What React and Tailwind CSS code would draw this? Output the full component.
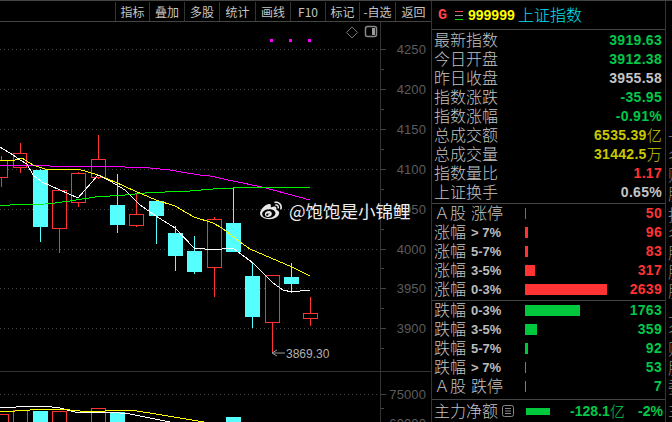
import React from "react";
import { FaWeibo } from "react-icons/fa";

const tools = [
  ["指标", "w-[34px]"],
  ["叠加", "w-[35px]"],
  ["多股", "w-[35px]"],
  ["统计", "w-[36px]"],
  ["画线", "w-[35px]"],
  ["F10", "w-[35px]"],
  ["标记", "w-[34px]"],
  ["-自选", "w-[36px]"],
  ["返回", "w-[36px]"],
];

const G = "text-[#00c848]";
const Y = "text-[#c8c800]";
const W = "text-[#c4c4c4]";
const R = "text-[#ff3333]";

const stats = [
  ["最新指数", "3919.63", G],
  ["今日开盘", "3912.38", G],
  ["昨日收盘", "3955.58", W],
  ["指数涨跌", "-35.95", G],
  ["指数涨幅", "-0.91%", G],
  ["总成交额", "6535.39", Y, "亿"],
  ["总成交量", "31442.5", Y, "万"],
  ["指数量比", "1.17", R],
  ["上证换手", "0.65%", W],
];

const ups = [
  ["Ａ股", "涨停", 1, "50", true],
  ["涨幅", "> 7%", 3, "96"],
  ["涨幅", "5-7%", 3, "83"],
  ["涨幅", "3-5%", 10, "317"],
  ["涨幅", "0-3%", 82, "2639"],
];
const downs = [
  ["跌幅", "0-3%", 55, "1763"],
  ["跌幅", "3-5%", 12, "359"],
  ["跌幅", "5-7%", 3, "92"],
  ["跌幅", "> 7%", 1, "53"],
  ["Ａ股", "跌停", 1, "7", true],
];

const edge = ["", "", "", "", "", "一", "名", "财", "股"];
const edge2 = ["指", "名", "股", "股", "股"];
const edge3 = ["上", "名", "财", "股", "委"];

const candles = [
  [-6, 8, 160, 177, 156, 187, 1, 1],
  [13, 27, 153, 167, 143, 173, 20, 1],
  [33, 48, 170, 227, 169, 242, 40, 0],
  [52, 67, 190, 228, 190, 253, 59, 1],
  [71, 86, 173, 202, 172, 207, 78, 1],
  [91, 106, 159, 177, 135, 179, 98, 1],
  [110, 125, 205, 225, 174, 233, 117, 0],
  [129, 144, 214, 225, 193, 227, 136, 1],
  [149, 164, 201, 216, 201, 244, 156, 0],
  [168, 183, 233, 256, 226, 271, 175, 0],
  [187, 202, 251, 272, 236, 274, 194, 0],
  [207, 222, 219, 267, 217, 297, 214, 1],
  [226, 241, 223, 252, 188, 252, 233, 0],
  [245, 260, 276, 317, 262, 328, 252, 0],
  [265, 280, 275, 322, 275, 353, 272, 1],
  [284, 299, 277, 284, 263, 293, 291, 0],
  [303, 318, 313, 318, 297, 326, 310, 1],
];

const white = "0,147 13,155 20,160 27,164 33,175 42,182 60,190 78,198 98,175 110,181 125,190 140,205 156,216 175,228 194,248 205,249 222,249 233,248 245,257 253,263 273,283 283,290 292,292 300,291 310,290";
const yellow = "0,160 15,160 22,158 33,165 45,169 60,170 78,169 98,175 115,182 135,191 156,200 175,206 194,217 213,223 222,228 240,242 250,249 292,267 310,276";
const magenta = "0,165 33,165 50,166 98,166 125,167 150,168 170,170 187,173 200,175 210,176 233,181 262,187 310,200";
const green = "0,205 10,205 45,204 55,203 70,201 95,197 125,195 145,193 165,192 190,191 213,189 233,188 262,187 300,187 310,188";
const volWhite = "0,408 16,407 43,406 60,408 75,412 80,413 110,412 130,414 150,418 175,423";
const volYellow = "0,412 30,410 60,409 80,411 105,411 130,410 150,413 180,418 210,423";

const grid = [49, 89, 129, 169, 209, 249, 288, 328, 394];
const labels = [
  [49, "4250"],
  [89, "4200"],
  [129, "4150"],
  [169, "4100"],
  [209, "4050"],
  [249, "4000"],
  [288, "3950"],
  [328, "3900"],
  [394, "75000"],
  [423, "60000"],
];
const minor = [69, 109, 149, 189, 229, 268, 308, 348, 408];

function Candle({ c }) {
  const [x1, x2, top, bot, hi, lo, wx, up] = c;
  const col = up ? "#ff3333" : "#55ffff";
  return (
    <g shapeRendering="crispEdges">
      <line x1={wx + 0.5} x2={wx + 0.5} y1={hi} y2={top} stroke={col} />
      <line x1={wx + 0.5} x2={wx + 0.5} y1={bot} y2={lo} stroke={col} />
      {up ? (
        <rect x={x1 + 0.5} y={top + 0.5} width={x2 - x1 - 1} height={bot - top} fill="#000" stroke={col} />
      ) : (
        <rect x={x1} y={top} width={x2 - x1} height={bot - top} fill={col} />
      )}
    </g>
  );
}

function Chart() {
  return (
    <svg width="431" height="400" viewBox="0 22 431 400" className="block">
      <g shapeRendering="crispEdges">
        {grid.map((y) => (
          <line key={y} x1="0" x2="380" y1={y + 0.5} y2={y + 0.5} stroke="#444" strokeDasharray="1 3" />
        ))}
        <line x1="380.5" x2="380.5" y1="22" y2="422" stroke="#333" />
        <line x1="0" x2="431" y1="371.5" y2="371.5" stroke="#333" />
        {labels.map(([y]) => (
          <line key={y} x1="381" x2="386" y1={y + 0.5} y2={y + 0.5} stroke="#444" />
        ))}
        {minor.map((y) => (
          <line key={y} x1="381" x2="384" y1={y + 0.5} y2={y + 0.5} stroke="#444" />
        ))}
        <rect x="270" y="39" width="3" height="3" fill="#ff00ff" />
        <rect x="289" y="39" width="3" height="3" fill="#ff00ff" />
        <rect x="308" y="39" width="3" height="3" fill="#ff00ff" />
      </g>
      <path d="M352 27 L357.5 32.5 L352 38 L346.5 32.5 Z" fill="none" stroke="#777" />
      <rect x="365.5" y="26.5" width="11" height="10" rx="2" fill="none" stroke="#888" strokeWidth="1.5" />
      <rect x="372" y="28" width="3" height="7" fill="#999" />
      {labels.map(([y, t]) => (
        <text key={t} x="426" y={y + 5} textAnchor="end" fill="#5c5c5c" fontFamily="Liberation Sans" fontSize="13" letterSpacing="0.1">
          {t}
        </text>
      ))}
      {candles.map((c, i) => (
        <Candle key={i} c={c} />
      ))}
      <g fill="none" shapeRendering="crispEdges">
        <polyline points={magenta} stroke="#ff00ff" />
        <polyline points={green} stroke="#00f000" />
        <polyline points={yellow} stroke="#ffff00" />
        <polyline points={white} stroke="#ffffff" />
      </g>
      <path d="M272 353 H285 M272 353 L277 350 M272 353 L277 356" stroke="#999" fill="none" />
      <text x="286" y="358" fill="#b0b0b0" fontFamily="Liberation Sans" fontSize="12">
        3869.30
      </text>
      <g shapeRendering="crispEdges">
        <rect x="-6" y="414.5" width="14" height="10" fill="none" stroke="#ff3333" />
        <rect x="13.5" y="410.5" width="14" height="14" fill="none" stroke="#ff3333" />
        <rect x="33" y="411" width="15" height="11" fill="#55ffff" />
        <rect x="52.5" y="411.5" width="14" height="14" fill="none" stroke="#ff3333" />
        <rect x="91.5" y="408.5" width="14" height="16" fill="none" stroke="#ff3333" />
        <rect x="110" y="412" width="15" height="10" fill="#55ffff" />
        <rect x="226" y="417" width="15" height="5" fill="#55ffff" />
        <polyline points={volWhite} stroke="#ffffff" fill="none" />
        <polyline points={volYellow} stroke="#ffff00" fill="none" />
      </g>
    </svg>
  );
}

function BarRow({ a, b, w, v, cjk, color, bg }) {
  return (
    <div className="h-[19px] flex items-center">
      <span className="w-[32px] ml-[2px] mb-[3px] text-[16px] font-light leading-none text-[#c4c4c4]">{a}</span>
      <span
        className={
          cjk
            ? "w-[54px] ml-[5px] mb-[3px] text-[16px] font-light leading-none text-[#c4c4c4]"
            : "w-[54px] ml-[5px] font-['Liberation_Sans'] font-bold text-[13px] leading-none text-[#bdbdbd]"
        }
      >
        {b}
      </span>
      <div className={"h-[11px] " + bg} style={{ width: w }} />
      <span className={"ml-auto mr-[3px] font-['Liberation_Sans'] font-bold text-[14px] tracking-[0.3px] " + color}>{v}</span>
    </div>
  );
}

export default function App() {
  return (
    <div className="w-[672px] h-[422px] bg-black border-t border-[#444] flex relative overflow-hidden font-['Noto_Sans_CJK_SC',sans-serif]">
      <div className="w-[432px] border-r border-[#333] flex flex-col shrink-0">
        <div className="h-[21px] border-b border-[#444] flex justify-end shrink-0">
          {tools.map(([t, w]) => (
            <div key={t} className={w + " mt-[1px] border-l border-[#333] flex items-center justify-center text-[12px] leading-none text-[#c4c4c4] whitespace-nowrap"}>
              {t}
            </div>
          ))}
        </div>
        <Chart />
      </div>

      <div className="w-[234px] border-r border-[#333] flex flex-col shrink-0">
        <div className="h-[29px] border-b border-[#444] flex items-center pl-[6px] shrink-0">
          <span className="w-[17px] font-['Liberation_Mono'] font-bold text-[15px] leading-none text-[#ff4444]">G</span>
          <span className="w-[13px] flex flex-col gap-[3px]">
            <span className="w-[8px] h-[1px] bg-[#ff4444]" />
            <span className="w-[8px] h-[1px] bg-[#999999]" />
            <span className="w-[8px] h-[1px] bg-[#00e000]" />
          </span>
          <span className="w-[50px] font-['Liberation_Sans'] font-bold text-[14px] text-[#ffff00]">999999</span>
          <span className="mb-[3px] text-[16px] font-light leading-none text-[#00e0f0]">上证指数</span>
        </div>

        <div className="border-b border-[#444] pt-[1px] pb-[1px] shrink-0">
          {stats.map(([l, v, c, u]) => (
            <div key={l} className="h-[19px] flex items-center pl-[2px] pr-[3px]">
              <span className="mb-[3px] text-[16px] font-light leading-none text-[#c4c4c4]">{l}</span>
              <span className={"ml-auto flex items-center font-['Liberation_Sans'] font-bold text-[14px] tracking-[0.3px] " + c}>
                {v}
                {u && <span className="font-['Noto_Sans_CJK_SC'] font-light text-[15px] leading-none mb-[2px]">{u}</span>}
              </span>
            </div>
          ))}
        </div>

        <div className="border-b border-[#444] pb-[1px] shrink-0">
          {ups.map(([a, b, w, v, cjk]) => (
            <BarRow key={a + b} a={a} b={b} w={w} v={v} cjk={cjk} color={R} bg="bg-[#ff3333]" />
          ))}
        </div>

        <div className="border-b border-[#444] pb-[3px] shrink-0">
          {downs.map(([a, b, w, v, cjk]) => (
            <BarRow key={a + b} a={a} b={b} w={w} v={v} cjk={cjk} color={G} bg="bg-[#00c83c]" />
          ))}
        </div>

        <div className="flex-1 flex items-center pl-[2px]">
          <span className="mb-[3px] text-[16px] font-light leading-none text-[#c4c4c4] whitespace-nowrap">主力净额</span>
          <svg width="12" height="12" viewBox="0 0 12 12" className="ml-[4px] shrink-0">
            <rect x="0.5" y="0.5" width="11" height="11" rx="2" fill="none" stroke="#888" />
            <path d="M3 3.5H9M3 6H9M3 8.5H9" stroke="#888" />
          </svg>
          <div className="ml-[12px] w-[24px] h-[7px] bg-[#00c83c] shrink-0" />
          <span className={"ml-[20px] flex items-center font-['Liberation_Sans'] font-bold text-[14px] whitespace-nowrap " + G}>
            -128.1<span className="font-['Noto_Sans_CJK_SC'] font-light text-[15px] leading-none mb-[2px]">亿</span>
          </span>
          <span className={"ml-auto mr-[2px] font-['Liberation_Sans'] font-bold text-[14px] " + G}>-2%</span>
        </div>
      </div>

      <div className="flex-1 overflow-hidden pl-[2px] text-[16px] font-light leading-none text-[#888888]">
        <div className="h-[29px]" />
        <div className="pt-[1px] pb-[2px]">
          {edge.map((t, i) => (
            <div key={i} className="h-[19px] flex items-center whitespace-nowrap">{t}</div>
          ))}
        </div>
        {edge2.map((t, i) => (
          <div key={i} className="h-[19px] flex items-center whitespace-nowrap">{t}</div>
        ))}
        <div className="h-[1px]" />
        {edge3.map((t, i) => (
          <div key={i} className="h-[19px] flex items-center whitespace-nowrap">{t}</div>
        ))}
        <div className="h-[4px]" />
        <div className="h-[20px] flex items-center whitespace-nowrap">主</div>
      </div>

      <div className="absolute left-[259px] top-[199px] flex items-center gap-[6px] text-[#eeeeee] [text-shadow:0_0_2px_#000]">
        <FaWeibo className="w-[24px] h-[22px] text-[#e8e8e8]" />
        <span className="text-[17.5px] leading-none whitespace-nowrap">@饱饱是小锦鲤</span>
      </div>
    </div>
  );
}
